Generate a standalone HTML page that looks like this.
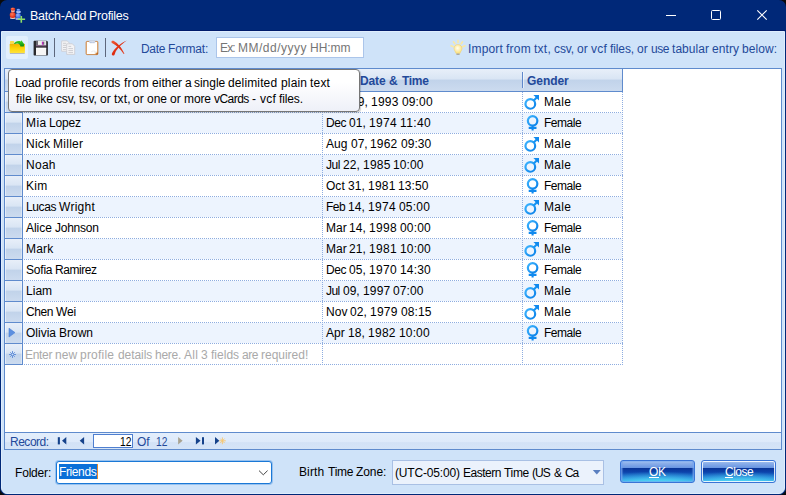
<!DOCTYPE html>
<html><head><meta charset="utf-8"><title>Batch-Add Profiles</title>
<style>
*{box-sizing:border-box;margin:0;padding:0}
html,body{width:786px;height:495px;overflow:hidden;background:#0a0a0a}
body{font-family:"Liberation Sans",sans-serif;font-size:12px;color:#000;position:relative}
.a{position:absolute}
.tx{position:absolute;white-space:pre;line-height:14px;height:14px}
#win{position:absolute;left:0;top:0;width:786px;height:495px;background:#002878;border-radius:7px;overflow:hidden}
</style></head><body>
<div id="win">

<div class="a" style="left:0;top:30px;width:786px;height:1px;background:#001b6b"></div>
<div class="a" style="left:1px;top:31px;width:784px;height:463px;background:#cfe3f9;border:1px solid #dfedfd;border-radius:0 0 6px 6px"></div>
<div class="a" style="left:6px;top:36px;width:22px;height:23px;background:#e2effd;border-radius:2px"></div>
<div class="a" style="left:54px;top:38px;width:1px;height:19px;background:#5d677c"></div>
<div class="a" style="left:105px;top:38px;width:1px;height:19px;background:#5d677c"></div>
<div class="a" style="left:216px;top:37px;width:148px;height:21px;background:#fff;border:1px solid #abc5ea"></div>
<div class="a" style="left:4px;top:68px;width:778px;height:382px;background:#fff;border:1px solid #5f8bcd"></div>
<div class="a" style="left:5px;top:69px;width:617px;height:23px;background:linear-gradient(#e8eff9 0,#d9e5f4 46%,#c1d3ea 50%,#ccdbef 100%);border-bottom:1px solid #5f8bcd"></div>
<div class="a" style="left:622px;top:69px;width:1px;height:23px;background:#5f8bcd"></div>
<div class="a" style="left:22px;top:72px;width:1px;height:16px;background:#5f88cc"></div>
<div class="a" style="left:23px;top:72px;width:1px;height:16px;background:rgba(255,255,255,.55)"></div>
<div class="a" style="left:322px;top:72px;width:1px;height:16px;background:#5f88cc"></div>
<div class="a" style="left:323px;top:72px;width:1px;height:16px;background:rgba(255,255,255,.55)"></div>
<div class="a" style="left:522px;top:72px;width:1px;height:16px;background:#5f88cc"></div>
<div class="a" style="left:523px;top:72px;width:1px;height:16px;background:rgba(255,255,255,.55)"></div>
<div class="a" style="left:23px;top:92px;width:599px;height:20px;background:#fff"></div>
<div class="a" style="left:24px;top:112px;width:599px;height:1px;background:repeating-linear-gradient(90deg,#8eade0 0 1px,transparent 1px 2px)"></div>
<div class="a" style="left:5px;top:92px;width:18px;height:21px;background:linear-gradient(#e8eff9 0,#d9e5f4 46%,#c1d3ea 50%,#ccdbef 100%);border-right:1px solid #5f8bcd;border-bottom:1px solid #5f8bcd;box-shadow:inset 1px 0 0 rgba(255,255,255,.5),inset -1px 0 0 rgba(255,255,255,.35)"></div>
<div class="a" style="left:23px;top:113px;width:599px;height:20px;background:#edf4fe"></div>
<div class="a" style="left:24px;top:133px;width:599px;height:1px;background:repeating-linear-gradient(90deg,#8eade0 0 1px,transparent 1px 2px)"></div>
<div class="a" style="left:5px;top:113px;width:18px;height:21px;background:linear-gradient(#e8eff9 0,#d9e5f4 46%,#c1d3ea 50%,#ccdbef 100%);border-right:1px solid #5f8bcd;border-bottom:1px solid #5f8bcd;box-shadow:inset 1px 0 0 rgba(255,255,255,.5),inset -1px 0 0 rgba(255,255,255,.35)"></div>
<div class="a" style="left:23px;top:134px;width:599px;height:20px;background:#fff"></div>
<div class="a" style="left:24px;top:154px;width:599px;height:1px;background:repeating-linear-gradient(90deg,#8eade0 0 1px,transparent 1px 2px)"></div>
<div class="a" style="left:5px;top:134px;width:18px;height:21px;background:linear-gradient(#e8eff9 0,#d9e5f4 46%,#c1d3ea 50%,#ccdbef 100%);border-right:1px solid #5f8bcd;border-bottom:1px solid #5f8bcd;box-shadow:inset 1px 0 0 rgba(255,255,255,.5),inset -1px 0 0 rgba(255,255,255,.35)"></div>
<div class="a" style="left:23px;top:155px;width:599px;height:20px;background:#edf4fe"></div>
<div class="a" style="left:24px;top:175px;width:599px;height:1px;background:repeating-linear-gradient(90deg,#8eade0 0 1px,transparent 1px 2px)"></div>
<div class="a" style="left:5px;top:155px;width:18px;height:21px;background:linear-gradient(#e8eff9 0,#d9e5f4 46%,#c1d3ea 50%,#ccdbef 100%);border-right:1px solid #5f8bcd;border-bottom:1px solid #5f8bcd;box-shadow:inset 1px 0 0 rgba(255,255,255,.5),inset -1px 0 0 rgba(255,255,255,.35)"></div>
<div class="a" style="left:23px;top:176px;width:599px;height:20px;background:#fff"></div>
<div class="a" style="left:24px;top:196px;width:599px;height:1px;background:repeating-linear-gradient(90deg,#8eade0 0 1px,transparent 1px 2px)"></div>
<div class="a" style="left:5px;top:176px;width:18px;height:21px;background:linear-gradient(#e8eff9 0,#d9e5f4 46%,#c1d3ea 50%,#ccdbef 100%);border-right:1px solid #5f8bcd;border-bottom:1px solid #5f8bcd;box-shadow:inset 1px 0 0 rgba(255,255,255,.5),inset -1px 0 0 rgba(255,255,255,.35)"></div>
<div class="a" style="left:23px;top:197px;width:599px;height:20px;background:#edf4fe"></div>
<div class="a" style="left:24px;top:217px;width:599px;height:1px;background:repeating-linear-gradient(90deg,#8eade0 0 1px,transparent 1px 2px)"></div>
<div class="a" style="left:5px;top:197px;width:18px;height:21px;background:linear-gradient(#e8eff9 0,#d9e5f4 46%,#c1d3ea 50%,#ccdbef 100%);border-right:1px solid #5f8bcd;border-bottom:1px solid #5f8bcd;box-shadow:inset 1px 0 0 rgba(255,255,255,.5),inset -1px 0 0 rgba(255,255,255,.35)"></div>
<div class="a" style="left:23px;top:218px;width:599px;height:20px;background:#fff"></div>
<div class="a" style="left:24px;top:238px;width:599px;height:1px;background:repeating-linear-gradient(90deg,#8eade0 0 1px,transparent 1px 2px)"></div>
<div class="a" style="left:5px;top:218px;width:18px;height:21px;background:linear-gradient(#e8eff9 0,#d9e5f4 46%,#c1d3ea 50%,#ccdbef 100%);border-right:1px solid #5f8bcd;border-bottom:1px solid #5f8bcd;box-shadow:inset 1px 0 0 rgba(255,255,255,.5),inset -1px 0 0 rgba(255,255,255,.35)"></div>
<div class="a" style="left:23px;top:239px;width:599px;height:20px;background:#edf4fe"></div>
<div class="a" style="left:24px;top:259px;width:599px;height:1px;background:repeating-linear-gradient(90deg,#8eade0 0 1px,transparent 1px 2px)"></div>
<div class="a" style="left:5px;top:239px;width:18px;height:21px;background:linear-gradient(#e8eff9 0,#d9e5f4 46%,#c1d3ea 50%,#ccdbef 100%);border-right:1px solid #5f8bcd;border-bottom:1px solid #5f8bcd;box-shadow:inset 1px 0 0 rgba(255,255,255,.5),inset -1px 0 0 rgba(255,255,255,.35)"></div>
<div class="a" style="left:23px;top:260px;width:599px;height:20px;background:#fff"></div>
<div class="a" style="left:24px;top:280px;width:599px;height:1px;background:repeating-linear-gradient(90deg,#8eade0 0 1px,transparent 1px 2px)"></div>
<div class="a" style="left:5px;top:260px;width:18px;height:21px;background:linear-gradient(#e8eff9 0,#d9e5f4 46%,#c1d3ea 50%,#ccdbef 100%);border-right:1px solid #5f8bcd;border-bottom:1px solid #5f8bcd;box-shadow:inset 1px 0 0 rgba(255,255,255,.5),inset -1px 0 0 rgba(255,255,255,.35)"></div>
<div class="a" style="left:23px;top:281px;width:599px;height:20px;background:#edf4fe"></div>
<div class="a" style="left:24px;top:301px;width:599px;height:1px;background:repeating-linear-gradient(90deg,#8eade0 0 1px,transparent 1px 2px)"></div>
<div class="a" style="left:5px;top:281px;width:18px;height:21px;background:linear-gradient(#e8eff9 0,#d9e5f4 46%,#c1d3ea 50%,#ccdbef 100%);border-right:1px solid #5f8bcd;border-bottom:1px solid #5f8bcd;box-shadow:inset 1px 0 0 rgba(255,255,255,.5),inset -1px 0 0 rgba(255,255,255,.35)"></div>
<div class="a" style="left:23px;top:302px;width:599px;height:20px;background:#fff"></div>
<div class="a" style="left:24px;top:322px;width:599px;height:1px;background:repeating-linear-gradient(90deg,#8eade0 0 1px,transparent 1px 2px)"></div>
<div class="a" style="left:5px;top:302px;width:18px;height:21px;background:linear-gradient(#e8eff9 0,#d9e5f4 46%,#c1d3ea 50%,#ccdbef 100%);border-right:1px solid #5f8bcd;border-bottom:1px solid #5f8bcd;box-shadow:inset 1px 0 0 rgba(255,255,255,.5),inset -1px 0 0 rgba(255,255,255,.35)"></div>
<div class="a" style="left:23px;top:323px;width:599px;height:20px;background:#edf4fe"></div>
<div class="a" style="left:24px;top:343px;width:599px;height:1px;background:repeating-linear-gradient(90deg,#8eade0 0 1px,transparent 1px 2px)"></div>
<div class="a" style="left:5px;top:323px;width:18px;height:21px;background:linear-gradient(#e8eff9 0,#d9e5f4 46%,#c1d3ea 50%,#ccdbef 100%);border-right:1px solid #5f8bcd;border-bottom:1px solid #5f8bcd;box-shadow:inset 1px 0 0 rgba(255,255,255,.5),inset -1px 0 0 rgba(255,255,255,.35)"></div>
<div class="a" style="left:23px;top:344px;width:599px;height:20px;background:#fff"></div>
<div class="a" style="left:24px;top:364px;width:599px;height:1px;background:repeating-linear-gradient(90deg,#8eade0 0 1px,transparent 1px 2px)"></div>
<div class="a" style="left:5px;top:344px;width:18px;height:21px;background:linear-gradient(#e8eff9 0,#d9e5f4 46%,#c1d3ea 50%,#ccdbef 100%);border-right:1px solid #5f8bcd;border-bottom:1px solid #5f8bcd;box-shadow:inset 1px 0 0 rgba(255,255,255,.5),inset -1px 0 0 rgba(255,255,255,.35)"></div>
<div class="a" style="left:322px;top:92px;width:1px;height:273px;background:repeating-linear-gradient(180deg,#8eade0 0 1px,transparent 1px 2px)"></div>
<div class="a" style="left:522px;top:92px;width:1px;height:273px;background:repeating-linear-gradient(180deg,#8eade0 0 1px,transparent 1px 2px)"></div>
<div class="a" style="left:622px;top:92px;width:1px;height:273px;background:repeating-linear-gradient(180deg,#8eade0 0 1px,transparent 1px 2px)"></div>
<div class="a" style="left:5px;top:432px;width:776px;height:17px;background:linear-gradient(#e3eefc 0,#deeafa 55%,#d3e2f6 60%,#d5e4f7 100%);border-top:1px solid #5f8bcd"></div>
<div class="a" style="left:93px;top:434px;width:40px;height:14px;background:#fff;border:1px solid #4f7fd0"></div>
<div class="a" style="left:56px;top:461px;width:216px;height:23px;background:#fff;border:1px solid #1a78d6;border-radius:3px;box-shadow:0 0 0 1px rgba(26,120,214,.3)"></div>
<div class="a" style="left:59px;top:464px;width:38px;height:15px;background:#0a70d8"></div>
<div class="a" style="left:97px;top:464px;width:1px;height:15px;background:#e8882a"></div>
<div class="a" style="left:392px;top:460px;width:212px;height:25px;background:#ebf2fc;border:1px solid #a9c0e4"></div>
<div class="a" style="left:620px;top:460px;width:75px;height:23px;background:radial-gradient(ellipse 95% 62% at 50% 112%,rgba(84,224,248,1) 0,rgba(84,224,248,.7) 40%,rgba(84,224,248,0) 100%),linear-gradient(#a9c6f2 0,#8db0ea 10%,#6b97e2 31%,#0a3598 35%,#0c41a8 50%,#1a6acc 75%,#339fe6 100%);border:1px solid #3a74d6;border-radius:3px;box-shadow:inset 0 0 0 1px rgba(120,170,240,.55),inset 2px 0 1px rgba(110,160,238,.45),inset -2px 0 1px rgba(110,160,238,.45);z-index:2"></div>
<div class="a" style="left:701px;top:460px;width:75px;height:23px;background:radial-gradient(ellipse 95% 62% at 50% 112%,rgba(84,224,248,1) 0,rgba(84,224,248,.7) 40%,rgba(84,224,248,0) 100%),linear-gradient(#a9c6f2 0,#8db0ea 10%,#6b97e2 31%,#0a3598 35%,#0c41a8 50%,#1a6acc 75%,#339fe6 100%);border:1px solid #3a74d6;border-radius:3px;box-shadow:inset 0 0 0 1px rgba(255,255,255,.85);z-index:2"></div>
<div class="a" style="left:649px;top:477px;width:10px;height:1px;background:#fff;z-index:3"></div>
<div class="a" style="left:725px;top:477px;width:8px;height:1px;background:#fff;z-index:3"></div>
<svg class="a" style="left:9px;top:7px" width="18" height="17" viewBox="0 0 18 17">
<defs><radialGradient id="rg" cx="40%" cy="35%" r="70%"><stop offset="0" stop-color="#ff7a58"/><stop offset="1" stop-color="#d81c06"/></radialGradient>
<radialGradient id="bg" cx="40%" cy="35%" r="70%"><stop offset="0" stop-color="#8fb4ff"/><stop offset="1" stop-color="#2f62dc"/></radialGradient></defs>
<ellipse cx="3.8" cy="11" rx="3" ry=".9" fill="#f3cfc6"/>
<rect x="2" y="2.6" width="3.8" height="2.4" rx=".8" fill="#f0a898"/>
<ellipse cx="3.9" cy="2" rx="2.4" ry="1.5" fill="url(#rg)"/>
<circle cx="3.7" cy="8.1" r="3" fill="url(#rg)"/>
<ellipse cx="9" cy="11.9" rx="2.6" ry=".9" fill="#b4c8f4"/>
<rect x="7.2" y="3.8" width="4.6" height="2.2" rx=".9" fill="#a9c0f6"/>
<ellipse cx="9.4" cy="3" rx="1.9" ry="1.3" fill="url(#bg)"/>
<circle cx="9.2" cy="8.7" r="2.6" fill="url(#bg)"/>
<path d="M12.3 9 v6.8 M9 12.3 h7.1" stroke="#8cdc68" stroke-width="1.6" fill="none"/>
</svg>
<svg class="a" style="left:660px;top:5px" width="115" height="20" viewBox="0 0 115 20">
<path d="M6 10.5 h10" stroke="#fff" stroke-width="1" fill="none"/>
<rect x="51.5" y="5.5" width="9" height="9" rx="1" fill="none" stroke="#fff" stroke-width="1"/>
<path d="M97.3 5.3 l9.4 9.4 M106.7 5.3 l-9.4 9.4" stroke="#fff" stroke-width="1.1" fill="none"/>
</svg>
<svg class="a" style="left:9px;top:40px" width="17" height="16" viewBox="0 0 17 16">
<defs><linearGradient id="fy" x1="0" y1="0" x2="0" y2="1"><stop offset="0" stop-color="#efb200"/><stop offset=".5" stop-color="#fdd408"/><stop offset="1" stop-color="#ffe340"/></linearGradient>
<linearGradient id="ga" x1="0" y1="0" x2="0" y2="1"><stop offset="0" stop-color="#46d824"/><stop offset="1" stop-color="#078a10"/></linearGradient></defs>
<path d="M1 1.8 q0-.7 .7-.7 h2.8 q.7 0 .7 .7 v2 h-4.2z" fill="#f9dc4a"/>
<rect x=".7" y="3.7" width="15.2" height="9.5" rx=".7" fill="url(#fy)"/>
<rect x=".9" y="13.1" width="14.8" height=".8" fill="#a7adb9"/>
<path d="M4.9 4 C5.8 1.4 9.2 .4 11.8 1.4 L12.4 .3 L15.2 4.2 L14.8 6.6 L11.4 6.4 C11.2 4.4 9.4 2.8 7.6 3.6 C7 3.9 6.2 4.3 4.9 4Z" fill="url(#ga)"/>
</svg>
<svg class="a" style="left:33px;top:40px" width="16" height="16" viewBox="0 0 16 16">
<path d="M.6 1.5 q0-.7 .7-.7 h12.2 q.6 0 1 .5 l.4 .5 v13 q0 .7 -.7 .7 h-12.9 q-.7 0 -.7-.7z" fill="#2a2a2e"/>
<rect x="3" y=".9" width="2" height="5" fill="#6a6a72"/>
<rect x="5" y=".8" width="8.2" height="4.6" fill="#e6e6e6"/>
<rect x="5" y="1.8" width="3.6" height=".7" fill="#f8f8f8"/><rect x="5" y="3.2" width="3.6" height=".7" fill="#f8f8f8"/>
<rect x="3" y="5.3" width="10.2" height="1" fill="#8e6490"/>
<rect x="8.9" y="1.7" width="1.5" height="3" fill="#c422c4"/>
<rect x="10.4" y="1.7" width=".8" height="3" fill="#3a3a48"/>
<rect x="3" y="7.8" width="10.2" height="7.4" fill="#f6f6f6"/>
<rect x="3" y="7.8" width="10.2" height=".8" fill="#ffffff"/>
</svg>
<svg class="a" style="left:61px;top:40px" width="15" height="16" viewBox="0 0 15 16">
<path d="M.6 .9 h5.6 l2.2 2.2 v8.2 h-7.8z" fill="#f3f3f5" stroke="#cdcdd2" stroke-width=".8"/>
<path d="M2 3.3 h3.2 M2 5.4 h4.4 M2 7.5 h3.4 M2 9.6 h3.4" stroke="#c3c3c8" stroke-width=".8"/>
<path d="M5.7 3.8 h5.6 l2.4 2.4 v8.2 h-8z" fill="#f4f4f6" stroke="#cacacf" stroke-width=".8"/>
<path d="M7.4 6.4 h2.8 M7.4 8.6 h4.6 M7.4 10.6 h4.6 M7.4 12.6 h4.6" stroke="#c3c3c8" stroke-width=".8"/>
</svg>
<svg class="a" style="left:85px;top:40px" width="15" height="16" viewBox="0 0 15 16">
<rect x="1.1" y="1.4" width="11.8" height="13.2" rx="1" fill="#e6a564" stroke="#cc884a" stroke-width=".9"/>
<path d="M1.9 2.1 h10.2 v9.8 l-2.4 2.2 h-7.8z" fill="#ffffff"/>
<path d="M12.1 11.6 l-2.6 2.5 q.6-1.6 -.2-2.5z" fill="#ebe7e0"/>
<path d="M12.9 12.2 l-2.4 2.4 h2.4z" fill="#b4601e"/>
<rect x="4.4" y=".5" width="5.6" height="2.4" rx=".7" fill="#dfe6f2" stroke="#b4c0d8" stroke-width=".4"/>
<path d="M5 2.2 h4.4" stroke="#8fa3cc" stroke-width=".7" stroke-dasharray=".8 .6"/>
<path d="M6.2 11.8 q2 -1.4 3.8 -.6" stroke="#e4e4e4" stroke-width=".7" fill="none"/>
</svg>
<svg class="a" style="left:111px;top:40px" width="17" height="17" viewBox="0 0 17 17">
<defs><linearGradient id="rx" x1="0" y1="0" x2="1" y2="1"><stop offset="0" stop-color="#f0603c"/><stop offset=".5" stop-color="#de2c10"/><stop offset="1" stop-color="#e2482a"/></linearGradient></defs>
<path d="M0.4 2.3 C0.2 1 1.6 0.5 2.9 1.1 C6.8 3.2 10.8 8 13.3 13.5 C13.5 14 12.9 14.3 12.5 13.8 C9.6 9.2 5.6 5.2 1 3.1 Z" fill="url(#rx)"/>
<path d="M15.8 0.6 C10 3 3.6 8.4 1.1 13 C0.5 14.2 0.8 15.7 2.2 15.6 C3.3 15.5 3.7 14.6 4 13.4 C5.2 9.6 10 4.6 15.8 0.6Z" fill="url(#rx)"/>
</svg>
<svg class="a" style="left:450px;top:39px" width="16" height="17" viewBox="0 0 16 17">
<defs><radialGradient id="lb" cx="45%" cy="40%" r="60%"><stop offset="0" stop-color="#fffdf0"/><stop offset="1" stop-color="#fbe07a"/></radialGradient></defs>
<path d="M8 1.2 v2.4 M3.4 2.8 l1.5 2 M12.6 2.8 l-1.5 2 M1 6.8 l2.2 .9 M15 6.8 l-2.2 .9" stroke="#fbe9a0" stroke-width="1.5" stroke-linecap="round" fill="none"/>
<path d="M8 5.6 C10.6 5.6 12 7.4 12 9.4 C12 11.4 10.4 12.4 10 14.4 H6 C5.6 12.4 4 11.4 4 9.4 C4 7.4 5.4 5.6 8 5.6Z" fill="url(#lb)" stroke="#f3cf6a" stroke-width=".5"/>
<rect x="6.4" y="14.4" width="3.2" height="1.6" rx=".5" fill="#a9a9a0"/>
</svg>
<svg class="a" style="left:523px;top:93px" width="17" height="17" viewBox="0 0 17 17"><defs><linearGradient id="mg0" x1="0" y1="0" x2="1" y2="1"><stop offset="0" stop-color="#3db4ff"/><stop offset="1" stop-color="#0a80e8"/></linearGradient></defs>
<circle cx="7.3" cy="10.9" r="4.85" fill="none" stroke="url(#mg0)" stroke-width="2.2"/>
<path d="M10.8 7.4 L14.4 3.8" stroke="#1593f2" stroke-width="2.1" fill="none"/>
<path d="M10.4 2 H16 V7.6 Z" fill="#1089ee"/></svg>
<svg class="a" style="left:524px;top:113px" width="17" height="18" viewBox="0 0 17 18"><defs><linearGradient id="mg1" x1="0" y1="0" x2="1" y2="1"><stop offset="0" stop-color="#3db4ff"/><stop offset="1" stop-color="#0a80e8"/></linearGradient></defs>
<circle cx="8.6" cy="7.8" r="4.75" fill="none" stroke="url(#mg1)" stroke-width="2.2"/>
<path d="M8.6 12.8 V17.6 M4.7 14.9 H12.5" stroke="#1089ee" stroke-width="2.1" fill="none"/></svg>
<svg class="a" style="left:523px;top:135px" width="17" height="17" viewBox="0 0 17 17"><defs><linearGradient id="mg2" x1="0" y1="0" x2="1" y2="1"><stop offset="0" stop-color="#3db4ff"/><stop offset="1" stop-color="#0a80e8"/></linearGradient></defs>
<circle cx="7.3" cy="10.9" r="4.85" fill="none" stroke="url(#mg2)" stroke-width="2.2"/>
<path d="M10.8 7.4 L14.4 3.8" stroke="#1593f2" stroke-width="2.1" fill="none"/>
<path d="M10.4 2 H16 V7.6 Z" fill="#1089ee"/></svg>
<svg class="a" style="left:523px;top:156px" width="17" height="17" viewBox="0 0 17 17"><defs><linearGradient id="mg3" x1="0" y1="0" x2="1" y2="1"><stop offset="0" stop-color="#3db4ff"/><stop offset="1" stop-color="#0a80e8"/></linearGradient></defs>
<circle cx="7.3" cy="10.9" r="4.85" fill="none" stroke="url(#mg3)" stroke-width="2.2"/>
<path d="M10.8 7.4 L14.4 3.8" stroke="#1593f2" stroke-width="2.1" fill="none"/>
<path d="M10.4 2 H16 V7.6 Z" fill="#1089ee"/></svg>
<svg class="a" style="left:524px;top:176px" width="17" height="18" viewBox="0 0 17 18"><defs><linearGradient id="mg4" x1="0" y1="0" x2="1" y2="1"><stop offset="0" stop-color="#3db4ff"/><stop offset="1" stop-color="#0a80e8"/></linearGradient></defs>
<circle cx="8.6" cy="7.8" r="4.75" fill="none" stroke="url(#mg4)" stroke-width="2.2"/>
<path d="M8.6 12.8 V17.6 M4.7 14.9 H12.5" stroke="#1089ee" stroke-width="2.1" fill="none"/></svg>
<svg class="a" style="left:523px;top:198px" width="17" height="17" viewBox="0 0 17 17"><defs><linearGradient id="mg5" x1="0" y1="0" x2="1" y2="1"><stop offset="0" stop-color="#3db4ff"/><stop offset="1" stop-color="#0a80e8"/></linearGradient></defs>
<circle cx="7.3" cy="10.9" r="4.85" fill="none" stroke="url(#mg5)" stroke-width="2.2"/>
<path d="M10.8 7.4 L14.4 3.8" stroke="#1593f2" stroke-width="2.1" fill="none"/>
<path d="M10.4 2 H16 V7.6 Z" fill="#1089ee"/></svg>
<svg class="a" style="left:524px;top:218px" width="17" height="18" viewBox="0 0 17 18"><defs><linearGradient id="mg6" x1="0" y1="0" x2="1" y2="1"><stop offset="0" stop-color="#3db4ff"/><stop offset="1" stop-color="#0a80e8"/></linearGradient></defs>
<circle cx="8.6" cy="7.8" r="4.75" fill="none" stroke="url(#mg6)" stroke-width="2.2"/>
<path d="M8.6 12.8 V17.6 M4.7 14.9 H12.5" stroke="#1089ee" stroke-width="2.1" fill="none"/></svg>
<svg class="a" style="left:523px;top:240px" width="17" height="17" viewBox="0 0 17 17"><defs><linearGradient id="mg7" x1="0" y1="0" x2="1" y2="1"><stop offset="0" stop-color="#3db4ff"/><stop offset="1" stop-color="#0a80e8"/></linearGradient></defs>
<circle cx="7.3" cy="10.9" r="4.85" fill="none" stroke="url(#mg7)" stroke-width="2.2"/>
<path d="M10.8 7.4 L14.4 3.8" stroke="#1593f2" stroke-width="2.1" fill="none"/>
<path d="M10.4 2 H16 V7.6 Z" fill="#1089ee"/></svg>
<svg class="a" style="left:524px;top:260px" width="17" height="18" viewBox="0 0 17 18"><defs><linearGradient id="mg8" x1="0" y1="0" x2="1" y2="1"><stop offset="0" stop-color="#3db4ff"/><stop offset="1" stop-color="#0a80e8"/></linearGradient></defs>
<circle cx="8.6" cy="7.8" r="4.75" fill="none" stroke="url(#mg8)" stroke-width="2.2"/>
<path d="M8.6 12.8 V17.6 M4.7 14.9 H12.5" stroke="#1089ee" stroke-width="2.1" fill="none"/></svg>
<svg class="a" style="left:523px;top:282px" width="17" height="17" viewBox="0 0 17 17"><defs><linearGradient id="mg9" x1="0" y1="0" x2="1" y2="1"><stop offset="0" stop-color="#3db4ff"/><stop offset="1" stop-color="#0a80e8"/></linearGradient></defs>
<circle cx="7.3" cy="10.9" r="4.85" fill="none" stroke="url(#mg9)" stroke-width="2.2"/>
<path d="M10.8 7.4 L14.4 3.8" stroke="#1593f2" stroke-width="2.1" fill="none"/>
<path d="M10.4 2 H16 V7.6 Z" fill="#1089ee"/></svg>
<svg class="a" style="left:523px;top:303px" width="17" height="17" viewBox="0 0 17 17"><defs><linearGradient id="mg10" x1="0" y1="0" x2="1" y2="1"><stop offset="0" stop-color="#3db4ff"/><stop offset="1" stop-color="#0a80e8"/></linearGradient></defs>
<circle cx="7.3" cy="10.9" r="4.85" fill="none" stroke="url(#mg10)" stroke-width="2.2"/>
<path d="M10.8 7.4 L14.4 3.8" stroke="#1593f2" stroke-width="2.1" fill="none"/>
<path d="M10.4 2 H16 V7.6 Z" fill="#1089ee"/></svg>
<svg class="a" style="left:524px;top:323px" width="17" height="18" viewBox="0 0 17 18"><defs><linearGradient id="mg11" x1="0" y1="0" x2="1" y2="1"><stop offset="0" stop-color="#3db4ff"/><stop offset="1" stop-color="#0a80e8"/></linearGradient></defs>
<circle cx="8.6" cy="7.8" r="4.75" fill="none" stroke="url(#mg11)" stroke-width="2.2"/>
<path d="M8.6 12.8 V17.6 M4.7 14.9 H12.5" stroke="#1089ee" stroke-width="2.1" fill="none"/></svg>
<svg class="a" style="left:8px;top:327px" width="9" height="12" viewBox="0 0 9 12"><path d="M1 1.2 L7 5.6 L1 10Z" fill="#5b8fe0" stroke="#4a7fd4" stroke-width=".6"/></svg>
<svg class="a" style="left:8px;top:350px" width="10" height="10" viewBox="0 0 10 10"><path d="M4.5 1 V8 M1 4.5 H8 M2.2 2.2 L6.8 6.8 M6.8 2.2 L2.2 6.8" stroke="#4f82d4" stroke-width=".8" fill="none"/><circle cx="4.5" cy="4.5" r="1.3" fill="#d3e1f3" stroke="#4f82d4" stroke-width=".8"/></svg>
<svg class="a" style="left:50px;top:432px" width="190" height="18" viewBox="0 0 190 18">
<rect x="7.8" y="5.2" width="2.1" height="7.2" fill="#15428b"/><path d="M16.3 5 V12.6 L12 8.8Z" fill="#15428b"/>
<path d="M34.1 5 V12.6 L29.7 8.8Z" fill="#15428b"/>
<path d="M128.1 5 V12.6 L132.6 8.8Z" fill="#a9a391"/>
<path d="M145.9 5 V12.6 L150.6 8.8Z" fill="#15428b"/><rect x="152" y="5.2" width="2" height="7.2" fill="#15428b"/>
<path d="M165 5 V12.6 L169.4 8.8Z" fill="#15428b"/>
<path d="M172.4 5.4 V12.2 M169.2 8.8 H175.8 M170.2 6.6 L174.6 11 M174.6 6.6 L170.2 11" stroke="#f6c670" stroke-width=".9" fill="none"/>
</svg>
<svg class="a" style="left:258px;top:469px" width="11" height="8" viewBox="0 0 11 8"><path d="M1 1.6 L5.3 5.8 L9.6 1.6" stroke="#444" stroke-width="1" fill="none"/></svg>
<svg class="a" style="left:592px;top:469px" width="10" height="7" viewBox="0 0 10 7"><path d="M.8 1 H8.8 L4.8 5.4Z" fill="#5a7fc0"/></svg>
<div class="a" style="left:8px;top:69px;width:352px;height:43px;background:linear-gradient(#fff 0,#fff 30%,#eef0f8 100%);border:1px solid #767676;border-radius:4px;box-shadow:1px 1px 1px rgba(0,0,0,.18);z-index:5"></div>
<span class="tx" style="z-index:1;top:9px;color:#fff;font-size:12.5px;font-weight:normal;left:30px;letter-spacing:-0.233px">Batch-Add</span>
<span class="tx" style="z-index:1;top:9px;color:#fff;font-size:12.5px;font-weight:normal;left:89px;letter-spacing:-0.274px">Profiles</span>
<span class="tx" style="z-index:1;top:42px;color:#23499a;font-size:12px;font-weight:normal;left:141px;letter-spacing:-0.310px">Date</span>
<span class="tx" style="z-index:1;top:42px;color:#23499a;font-size:12px;font-weight:normal;left:168px;letter-spacing:-0.164px">Format:</span>
<span class="tx" style="z-index:1;top:41px;color:#757575;font-size:12px;font-weight:normal;left:220px;letter-spacing:-0.846px">Ex:</span>
<span class="tx" style="z-index:1;top:41px;color:#757575;font-size:12px;font-weight:normal;left:238px;letter-spacing:0.507px">MM/dd/yyyy</span>
<span class="tx" style="z-index:1;top:41px;color:#757575;font-size:12px;font-weight:normal;left:310px;letter-spacing:-0.041px">HH:mm</span>
<span class="tx" style="z-index:1;top:42px;color:#23499a;font-size:12px;font-weight:normal;left:468px;letter-spacing:0.170px">Import</span>
<span class="tx" style="z-index:1;top:42px;color:#23499a;font-size:12px;font-weight:normal;left:506px;letter-spacing:0.256px">from</span>
<span class="tx" style="z-index:1;top:42px;color:#23499a;font-size:12px;font-weight:normal;left:534px;letter-spacing:0.250px">txt,</span>
<span class="tx" style="z-index:1;top:42px;color:#23499a;font-size:12px;font-weight:normal;left:554px;letter-spacing:-0.108px">csv,</span>
<span class="tx" style="z-index:1;top:42px;color:#23499a;font-size:12px;font-weight:normal;left:577px;letter-spacing:0.169px">or</span>
<span class="tx" style="z-index:1;top:42px;color:#23499a;font-size:12px;font-weight:normal;left:591px;letter-spacing:0.224px">vcf</span>
<span class="tx" style="z-index:1;top:42px;color:#23499a;font-size:12px;font-weight:normal;left:610px;letter-spacing:-0.111px">files,</span>
<span class="tx" style="z-index:1;top:42px;color:#23499a;font-size:12px;font-weight:normal;left:637px;letter-spacing:0.169px">or</span>
<span class="tx" style="z-index:1;top:42px;color:#23499a;font-size:12px;font-weight:normal;left:651px;letter-spacing:-0.447px">use</span>
<span class="tx" style="z-index:1;top:42px;color:#23499a;font-size:12px;font-weight:normal;left:672px;letter-spacing:0.048px">tabular</span>
<span class="tx" style="z-index:1;top:42px;color:#23499a;font-size:12px;font-weight:normal;left:712px;letter-spacing:0.068px">entry</span>
<span class="tx" style="z-index:1;top:42px;color:#23499a;font-size:12px;font-weight:normal;left:742px;letter-spacing:0.058px">below:</span>
<span class="tx" style="z-index:10;top:76px;color:#000;font-size:12px;font-weight:normal;left:15px;letter-spacing:-0.143px">Load</span>
<span class="tx" style="z-index:10;top:76px;color:#000;font-size:12px;font-weight:normal;left:44px;letter-spacing:0.212px">profile</span>
<span class="tx" style="z-index:10;top:76px;color:#000;font-size:12px;font-weight:normal;left:81px;letter-spacing:-0.117px">records</span>
<span class="tx" style="z-index:10;top:76px;color:#000;font-size:12px;font-weight:normal;left:124px;letter-spacing:0.281px">from</span>
<span class="tx" style="z-index:10;top:76px;color:#000;font-size:12px;font-weight:normal;left:152px;letter-spacing:0.020px">either</span>
<span class="tx" style="z-index:10;top:76px;color:#000;font-size:12px;font-weight:normal;left:185px;letter-spacing:-0.657px">a</span>
<span class="tx" style="z-index:10;top:76px;color:#000;font-size:12px;font-weight:normal;left:194px;letter-spacing:-0.034px">single</span>
<span class="tx" style="z-index:10;top:76px;color:#000;font-size:12px;font-weight:normal;left:228px;letter-spacing:0.135px">delimited</span>
<span class="tx" style="z-index:10;top:76px;color:#000;font-size:12px;font-weight:normal;left:281px;letter-spacing:0.154px">plain</span>
<span class="tx" style="z-index:10;top:76px;color:#000;font-size:12px;font-weight:normal;left:310px;letter-spacing:0.189px">text</span>
<span class="tx" style="z-index:10;top:92px;color:#000;font-size:12px;font-weight:normal;left:16px;letter-spacing:0.148px">file</span>
<span class="tx" style="z-index:10;top:92px;color:#000;font-size:12px;font-weight:normal;left:35px;letter-spacing:-0.022px">like</span>
<span class="tx" style="z-index:10;top:92px;color:#000;font-size:12px;font-weight:normal;left:56px;letter-spacing:-0.134px">csv,</span>
<span class="tx" style="z-index:10;top:92px;color:#000;font-size:12px;font-weight:normal;left:79px;letter-spacing:0.036px">tsv,</span>
<span class="tx" style="z-index:10;top:92px;color:#000;font-size:12px;font-weight:normal;left:100px;letter-spacing:0.141px">or</span>
<span class="tx" style="z-index:10;top:92px;color:#000;font-size:12px;font-weight:normal;left:114px;letter-spacing:0.229px">txt,</span>
<span class="tx" style="z-index:10;top:92px;color:#000;font-size:12px;font-weight:normal;left:133px;letter-spacing:0.141px">or</span>
<span class="tx" style="z-index:10;top:92px;color:#000;font-size:12px;font-weight:normal;left:147px;letter-spacing:-0.038px">one</span>
<span class="tx" style="z-index:10;top:92px;color:#000;font-size:12px;font-weight:normal;left:170px;letter-spacing:0.141px">or</span>
<span class="tx" style="z-index:10;top:92px;color:#000;font-size:12px;font-weight:normal;left:184px;letter-spacing:-0.114px">more</span>
<span class="tx" style="z-index:10;top:92px;color:#000;font-size:12px;font-weight:normal;left:214px;letter-spacing:-0.527px">vCards</span>
<span class="tx" style="z-index:10;top:92px;color:#000;font-size:12px;font-weight:normal;left:252px;letter-spacing:0.979px">-</span>
<span class="tx" style="z-index:10;top:92px;color:#000;font-size:12px;font-weight:normal;left:260px;letter-spacing:0.197px">vcf</span>
<span class="tx" style="z-index:10;top:92px;color:#000;font-size:12px;font-weight:normal;left:279px;letter-spacing:-0.131px">files.</span>
<span class="tx" style="z-index:1;top:74px;color:#23499a;font-size:12px;font-weight:bold;left:360px;letter-spacing:-0.136px">Date</span>
<span class="tx" style="z-index:1;top:74px;color:#23499a;font-size:12px;font-weight:bold;left:389px;letter-spacing:1.942px">&amp;</span>
<span class="tx" style="z-index:1;top:74px;color:#23499a;font-size:12px;font-weight:bold;left:402px;letter-spacing:-0.316px">Time</span>
<span class="tx" style="z-index:1;top:74px;color:#23499a;font-size:12px;font-weight:bold;left:527px;letter-spacing:-0.065px">Gender</span>
<span class="tx" style="z-index:1;top:95px;color:#000;font-size:12px;font-weight:normal;left:326px;letter-spacing:0.038px">May</span>
<span class="tx" style="z-index:1;top:95px;color:#000;font-size:12px;font-weight:normal;left:351px;letter-spacing:0.052px">09,</span>
<span class="tx" style="z-index:1;top:95px;color:#000;font-size:12px;font-weight:normal;left:371px;letter-spacing:0.259px">1993</span>
<span class="tx" style="z-index:1;top:95px;color:#000;font-size:12px;font-weight:normal;left:402px;letter-spacing:0.136px">09:00</span>
<span class="tx" style="z-index:1;top:95px;color:#000;font-size:12px;font-weight:normal;left:544px;letter-spacing:0.312px">Male</span>
<span class="tx" style="z-index:1;top:116px;color:#000;font-size:12px;font-weight:normal;left:26px;letter-spacing:0.387px">Mia</span>
<span class="tx" style="z-index:1;top:116px;color:#000;font-size:12px;font-weight:normal;left:49px;letter-spacing:-0.184px">Lopez</span>
<span class="tx" style="z-index:1;top:116px;color:#000;font-size:12px;font-weight:normal;left:326px;letter-spacing:-0.458px">Dec</span>
<span class="tx" style="z-index:1;top:116px;color:#000;font-size:12px;font-weight:normal;left:349px;letter-spacing:0.095px">01,</span>
<span class="tx" style="z-index:1;top:116px;color:#000;font-size:12px;font-weight:normal;left:369px;letter-spacing:0.313px">1974</span>
<span class="tx" style="z-index:1;top:116px;color:#000;font-size:12px;font-weight:normal;left:400px;letter-spacing:0.362px">11:40</span>
<span class="tx" style="z-index:1;top:116px;color:#000;font-size:12px;font-weight:normal;left:544px;letter-spacing:-0.473px">Female</span>
<span class="tx" style="z-index:1;top:137px;color:#000;font-size:12px;font-weight:normal;left:26px;letter-spacing:0.217px">Nick</span>
<span class="tx" style="z-index:1;top:137px;color:#000;font-size:12px;font-weight:normal;left:53px;letter-spacing:0.266px">Miller</span>
<span class="tx" style="z-index:1;top:137px;color:#000;font-size:12px;font-weight:normal;left:326px;letter-spacing:0.051px">Aug</span>
<span class="tx" style="z-index:1;top:137px;color:#000;font-size:12px;font-weight:normal;left:351px;letter-spacing:-0.022px">07,</span>
<span class="tx" style="z-index:1;top:137px;color:#000;font-size:12px;font-weight:normal;left:370px;letter-spacing:0.169px">1962</span>
<span class="tx" style="z-index:1;top:137px;color:#000;font-size:12px;font-weight:normal;left:401px;letter-spacing:0.056px">09:30</span>
<span class="tx" style="z-index:1;top:137px;color:#000;font-size:12px;font-weight:normal;left:544px;letter-spacing:0.312px">Male</span>
<span class="tx" style="z-index:1;top:158px;color:#000;font-size:12px;font-weight:normal;left:26px;letter-spacing:0.275px">Noah</span>
<span class="tx" style="z-index:1;top:158px;color:#000;font-size:12px;font-weight:normal;left:326px;letter-spacing:-0.509px">Jul</span>
<span class="tx" style="z-index:1;top:158px;color:#000;font-size:12px;font-weight:normal;left:343px;letter-spacing:0.030px">22,</span>
<span class="tx" style="z-index:1;top:158px;color:#000;font-size:12px;font-weight:normal;left:363px;letter-spacing:0.232px">1985</span>
<span class="tx" style="z-index:1;top:158px;color:#000;font-size:12px;font-weight:normal;left:393px;letter-spacing:0.112px">10:00</span>
<span class="tx" style="z-index:1;top:158px;color:#000;font-size:12px;font-weight:normal;left:544px;letter-spacing:0.312px">Male</span>
<span class="tx" style="z-index:1;top:179px;color:#000;font-size:12px;font-weight:normal;left:26px;letter-spacing:0.255px">Kim</span>
<span class="tx" style="z-index:1;top:179px;color:#000;font-size:12px;font-weight:normal;left:326px;letter-spacing:0.024px">Oct</span>
<span class="tx" style="z-index:1;top:179px;color:#000;font-size:12px;font-weight:normal;left:348px;letter-spacing:0.028px">31,</span>
<span class="tx" style="z-index:1;top:179px;color:#000;font-size:12px;font-weight:normal;left:368px;letter-spacing:0.230px">1981</span>
<span class="tx" style="z-index:1;top:179px;color:#000;font-size:12px;font-weight:normal;left:398px;letter-spacing:0.110px">13:50</span>
<span class="tx" style="z-index:1;top:179px;color:#000;font-size:12px;font-weight:normal;left:544px;letter-spacing:-0.473px">Female</span>
<span class="tx" style="z-index:1;top:200px;color:#000;font-size:12px;font-weight:normal;left:26px;letter-spacing:-0.386px">Lucas</span>
<span class="tx" style="z-index:1;top:200px;color:#000;font-size:12px;font-weight:normal;left:59px;letter-spacing:0.278px">Wright</span>
<span class="tx" style="z-index:1;top:200px;color:#000;font-size:12px;font-weight:normal;left:326px;letter-spacing:-0.562px">Feb</span>
<span class="tx" style="z-index:1;top:200px;color:#000;font-size:12px;font-weight:normal;left:348px;letter-spacing:0.105px">14,</span>
<span class="tx" style="z-index:1;top:200px;color:#000;font-size:12px;font-weight:normal;left:368px;letter-spacing:0.325px">1974</span>
<span class="tx" style="z-index:1;top:200px;color:#000;font-size:12px;font-weight:normal;left:399px;letter-spacing:0.195px">05:00</span>
<span class="tx" style="z-index:1;top:200px;color:#000;font-size:12px;font-weight:normal;left:544px;letter-spacing:0.312px">Male</span>
<span class="tx" style="z-index:1;top:221px;color:#000;font-size:12px;font-weight:normal;left:26px;letter-spacing:-0.040px">Alice</span>
<span class="tx" style="z-index:1;top:221px;color:#000;font-size:12px;font-weight:normal;left:55px;letter-spacing:-0.241px">Johnson</span>
<span class="tx" style="z-index:1;top:221px;color:#000;font-size:12px;font-weight:normal;left:326px;letter-spacing:0.083px">Mar</span>
<span class="tx" style="z-index:1;top:221px;color:#000;font-size:12px;font-weight:normal;left:349px;letter-spacing:0.083px">14,</span>
<span class="tx" style="z-index:1;top:221px;color:#000;font-size:12px;font-weight:normal;left:369px;letter-spacing:0.298px">1998</span>
<span class="tx" style="z-index:1;top:221px;color:#000;font-size:12px;font-weight:normal;left:400px;letter-spacing:0.170px">00:00</span>
<span class="tx" style="z-index:1;top:221px;color:#000;font-size:12px;font-weight:normal;left:544px;letter-spacing:-0.473px">Female</span>
<span class="tx" style="z-index:1;top:242px;color:#000;font-size:12px;font-weight:normal;left:26px;letter-spacing:0.223px">Mark</span>
<span class="tx" style="z-index:1;top:242px;color:#000;font-size:12px;font-weight:normal;left:326px;letter-spacing:0.083px">Mar</span>
<span class="tx" style="z-index:1;top:242px;color:#000;font-size:12px;font-weight:normal;left:349px;letter-spacing:0.083px">21,</span>
<span class="tx" style="z-index:1;top:242px;color:#000;font-size:12px;font-weight:normal;left:369px;letter-spacing:0.298px">1981</span>
<span class="tx" style="z-index:1;top:242px;color:#000;font-size:12px;font-weight:normal;left:400px;letter-spacing:0.170px">10:00</span>
<span class="tx" style="z-index:1;top:242px;color:#000;font-size:12px;font-weight:normal;left:544px;letter-spacing:0.312px">Male</span>
<span class="tx" style="z-index:1;top:263px;color:#000;font-size:12px;font-weight:normal;left:26px;letter-spacing:-0.206px">Sofia</span>
<span class="tx" style="z-index:1;top:263px;color:#000;font-size:12px;font-weight:normal;left:55px;letter-spacing:-0.450px">Ramirez</span>
<span class="tx" style="z-index:1;top:263px;color:#000;font-size:12px;font-weight:normal;left:326px;letter-spacing:-0.450px">Dec</span>
<span class="tx" style="z-index:1;top:263px;color:#000;font-size:12px;font-weight:normal;left:349px;letter-spacing:0.103px">05,</span>
<span class="tx" style="z-index:1;top:263px;color:#000;font-size:12px;font-weight:normal;left:369px;letter-spacing:0.323px">1970</span>
<span class="tx" style="z-index:1;top:263px;color:#000;font-size:12px;font-weight:normal;left:400px;letter-spacing:0.192px">14:30</span>
<span class="tx" style="z-index:1;top:263px;color:#000;font-size:12px;font-weight:normal;left:544px;letter-spacing:-0.473px">Female</span>
<span class="tx" style="z-index:1;top:284px;color:#000;font-size:12px;font-weight:normal;left:26px;letter-spacing:0.030px">Liam</span>
<span class="tx" style="z-index:1;top:284px;color:#000;font-size:12px;font-weight:normal;left:326px;letter-spacing:-0.533px">Jul</span>
<span class="tx" style="z-index:1;top:284px;color:#000;font-size:12px;font-weight:normal;left:343px;letter-spacing:0.001px">09,</span>
<span class="tx" style="z-index:1;top:284px;color:#000;font-size:12px;font-weight:normal;left:363px;letter-spacing:0.197px">1997</span>
<span class="tx" style="z-index:1;top:284px;color:#000;font-size:12px;font-weight:normal;left:393px;letter-spacing:0.081px">07:00</span>
<span class="tx" style="z-index:1;top:284px;color:#000;font-size:12px;font-weight:normal;left:544px;letter-spacing:0.312px">Male</span>
<span class="tx" style="z-index:1;top:305px;color:#000;font-size:12px;font-weight:normal;left:26px;letter-spacing:-0.392px">Chen</span>
<span class="tx" style="z-index:1;top:305px;color:#000;font-size:12px;font-weight:normal;left:56px;letter-spacing:-0.121px">Wei</span>
<span class="tx" style="z-index:1;top:305px;color:#000;font-size:12px;font-weight:normal;left:326px;letter-spacing:0.118px">Nov</span>
<span class="tx" style="z-index:1;top:305px;color:#000;font-size:12px;font-weight:normal;left:350px;letter-spacing:0.027px">02,</span>
<span class="tx" style="z-index:1;top:305px;color:#000;font-size:12px;font-weight:normal;left:370px;letter-spacing:0.228px">1979</span>
<span class="tx" style="z-index:1;top:305px;color:#000;font-size:12px;font-weight:normal;left:401px;letter-spacing:0.109px">08:15</span>
<span class="tx" style="z-index:1;top:305px;color:#000;font-size:12px;font-weight:normal;left:544px;letter-spacing:0.312px">Male</span>
<span class="tx" style="z-index:1;top:326px;color:#000;font-size:12px;font-weight:normal;left:26px;letter-spacing:-0.010px">Olivia</span>
<span class="tx" style="z-index:1;top:326px;color:#000;font-size:12px;font-weight:normal;left:59px;letter-spacing:-0.013px">Brown</span>
<span class="tx" style="z-index:1;top:326px;color:#000;font-size:12px;font-weight:normal;left:326px;letter-spacing:0.052px">Apr</span>
<span class="tx" style="z-index:1;top:326px;color:#000;font-size:12px;font-weight:normal;left:348px;letter-spacing:0.058px">18,</span>
<span class="tx" style="z-index:1;top:326px;color:#000;font-size:12px;font-weight:normal;left:368px;letter-spacing:0.267px">1982</span>
<span class="tx" style="z-index:1;top:326px;color:#000;font-size:12px;font-weight:normal;left:399px;letter-spacing:0.143px">10:00</span>
<span class="tx" style="z-index:1;top:326px;color:#000;font-size:12px;font-weight:normal;left:544px;letter-spacing:-0.473px">Female</span>
<span class="tx" style="z-index:1;top:348px;color:#a9a9a9;font-size:12px;font-weight:normal;left:25px;letter-spacing:-0.311px">Enter</span>
<span class="tx" style="z-index:1;top:348px;color:#a9a9a9;font-size:12px;font-weight:normal;left:55px;letter-spacing:0.030px">new</span>
<span class="tx" style="z-index:1;top:348px;color:#a9a9a9;font-size:12px;font-weight:normal;left:80px;letter-spacing:0.211px">profile</span>
<span class="tx" style="z-index:1;top:348px;color:#a9a9a9;font-size:12px;font-weight:normal;left:118px;letter-spacing:-0.075px">details</span>
<span class="tx" style="z-index:1;top:348px;color:#a9a9a9;font-size:12px;font-weight:normal;left:155px;letter-spacing:-0.247px">here.</span>
<span class="tx" style="z-index:1;top:348px;color:#a9a9a9;font-size:12px;font-weight:normal;left:184px;letter-spacing:0.241px">All</span>
<span class="tx" style="z-index:1;top:348px;color:#a9a9a9;font-size:12px;font-weight:normal;left:201px;letter-spacing:0.347px">3</span>
<span class="tx" style="z-index:1;top:348px;color:#a9a9a9;font-size:12px;font-weight:normal;left:211px;letter-spacing:0.020px">fields</span>
<span class="tx" style="z-index:1;top:348px;color:#a9a9a9;font-size:12px;font-weight:normal;left:242px;letter-spacing:-0.422px">are</span>
<span class="tx" style="z-index:1;top:348px;color:#a9a9a9;font-size:12px;font-weight:normal;left:261px;letter-spacing:-0.016px">required!</span>
<span class="tx" style="z-index:1;top:435px;color:#23499a;font-size:12px;font-weight:normal;left:10px;letter-spacing:-0.483px">Record:</span>
<span class="tx" style="z-index:1;top:435px;color:#000;font-size:12px;font-weight:normal;transform-origin:0 0;transform:scaleX(0.8583);left:120px;letter-spacing:0.000px">12</span>
<span class="tx" style="z-index:1;top:435px;color:#23499a;font-size:12px;font-weight:normal;left:137px;letter-spacing:-0.050px">Of</span>
<span class="tx" style="z-index:1;top:435px;color:#23499a;font-size:12px;font-weight:normal;transform-origin:0 0;transform:scaleX(0.8500);left:156px;letter-spacing:0.000px">12</span>
<span class="tx" style="z-index:1;top:466px;color:#000;font-size:12px;font-weight:normal;left:15px;letter-spacing:-0.188px">Folder:</span>
<span class="tx" style="z-index:1;top:465px;color:#fff;font-size:12px;font-weight:normal;left:59px;letter-spacing:-0.388px">Friends</span>
<span class="tx" style="z-index:1;top:465px;color:#000;font-size:12px;font-weight:normal;left:299px;letter-spacing:0.117px">Birth</span>
<span class="tx" style="z-index:1;top:465px;color:#000;font-size:12px;font-weight:normal;left:328px;letter-spacing:-0.241px">Time</span>
<span class="tx" style="z-index:1;top:465px;color:#000;font-size:12px;font-weight:normal;left:356px;letter-spacing:-0.073px">Zone:</span>
<span class="tx" style="z-index:1;top:466px;color:#000;font-size:12px;font-weight:normal;left:395px;letter-spacing:-0.171px">(UTC-05:00)</span>
<span class="tx" style="z-index:1;top:466px;color:#000;font-size:12px;font-weight:normal;left:463px;letter-spacing:-0.496px">Eastern</span>
<span class="tx" style="z-index:1;top:466px;color:#000;font-size:12px;font-weight:normal;left:504px;letter-spacing:-0.327px">Time</span>
<span class="tx" style="z-index:1;top:466px;color:#000;font-size:12px;font-weight:normal;left:532px;letter-spacing:-0.909px">(US</span>
<span class="tx" style="z-index:1;top:466px;color:#000;font-size:12px;font-weight:normal;left:554px;letter-spacing:1.954px">&amp;</span>
<span class="tx" style="z-index:1;top:466px;color:#000;font-size:12px;font-weight:normal;left:565px;letter-spacing:-1.191px">Ca</span>
<span class="tx" style="z-index:3;top:465px;color:#fff;font-size:12px;font-weight:normal;left:649px;letter-spacing:-0.435px">OK</span>
<span class="tx" style="z-index:3;top:465px;color:#fff;font-size:12px;font-weight:normal;left:725px;letter-spacing:-0.512px">Close</span>
</div></body></html>
